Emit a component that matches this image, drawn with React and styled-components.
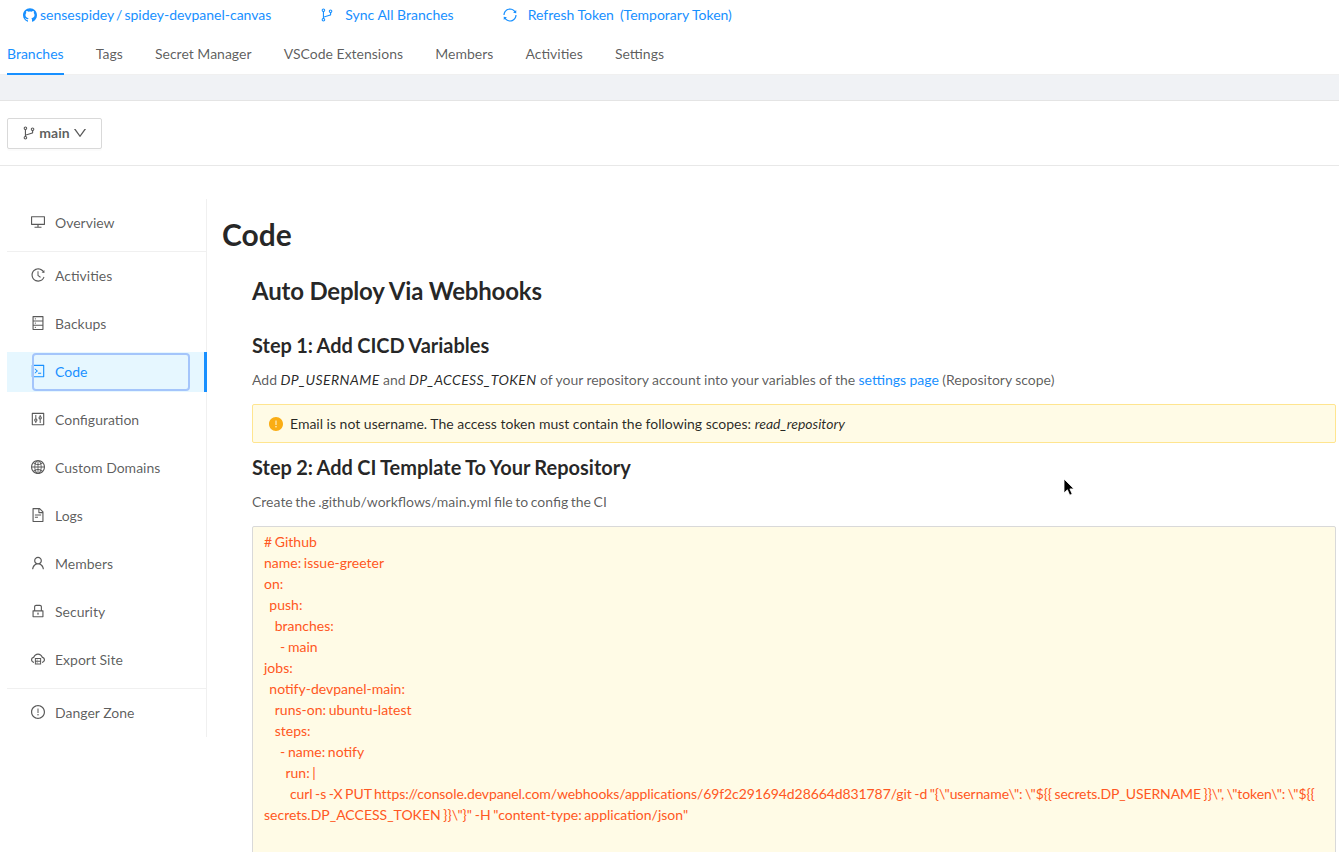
import React from 'react'
import styled, { createGlobalStyle } from 'styled-components'
import {
  AiFillGithub, AiOutlineBranches, AiOutlineSync, AiOutlineDown, AiOutlineDesktop, AiOutlineHistory,
  AiOutlineDatabase, AiOutlineCode, AiOutlineControl, AiOutlineGlobal, AiOutlineFileText, AiOutlineUser,
  AiOutlineLock, AiOutlineCloudServer, AiOutlineExclamationCircle, AiFillExclamationCircle,
} from 'react-icons/ai'

const GlobalStyle = createGlobalStyle`
  html, body { margin: 0; padding: 0; height: 100%; overflow: hidden; background: #fff; }
  body { font-family: Lato, "Liberation Sans", sans-serif; font-size: 14px; line-height: 21px; color: rgba(0, 0, 0, 0.85); }
  * { box-sizing: border-box; }
`

const tabs = ['Branches', 'Tags', 'Secret Manager', 'VSCode Extensions', 'Members', 'Activities', 'Settings']

const yamlHead = `# Github
name: issue-greeter
on:
  push:
    branches:
      - main
jobs:
  notify-devpanel-main:
    runs-on: ubuntu-latest
    steps:
      - name: notify
        run: |`

const curlLine = `          curl -s -X PUT https://console.devpanel.com/webhooks/applications/69f2c291694d28664d831787/git -d "{\\"username\\": \\"\${{ secrets.DP_USERNAME }}\\", \\"token\\": \\"\${{ `

const curlTail = `secrets.DP_ACCESS_TOKEN }}\\"}" -H "content-type: application/json"
`

export default function App() {
  return (
    <Page>
      <GlobalStyle />
      <TopLinks>
        <TopLink $gap={2} $tight><AiFillGithub size={16} />sensespidey / spidey-devpanel-canvas</TopLink>
        <TopLink><AiOutlineBranches size={16} />Sync All Branches</TopLink>
        <TopLink><AiOutlineSync size={16} /><span>Refresh Token</span><Note>(Temporary Token)</Note></TopLink>
      </TopLinks>
      <Tabs>
        {tabs.map((t, i) => <Tab key={t} $active={i === 0}>{t}</Tab>)}
      </Tabs>
      <Band />
      <BranchBar>
        <BranchButton>
          <AiOutlineBranches size={16} />
          <strong>main</strong>
          <AiOutlineDown size={16} />
        </BranchButton>
      </BranchBar>
      <Main>
        <Sidebar>
          <NavItem><AiOutlineDesktop />Overview</NavItem>
          <NavDivider />
          <NavItem><AiOutlineHistory />Activities</NavItem>
          <NavItem><AiOutlineDatabase />Backups</NavItem>
          <NavItem $active><AiOutlineCode />Code<FocusRing /></NavItem>
          <NavItem><AiOutlineControl />Configuration</NavItem>
          <NavItem><AiOutlineGlobal />Custom Domains</NavItem>
          <NavItem><AiOutlineFileText />Logs</NavItem>
          <NavItem><AiOutlineUser />Members</NavItem>
          <NavItem><AiOutlineLock />Security</NavItem>
          <NavItem><AiOutlineCloudServer />Export Site</NavItem>
          <NavDivider />
          <NavItem><AiOutlineExclamationCircle />Danger Zone</NavItem>
        </Sidebar>
        <Content>
          <PageTitle>Code</PageTitle>
          <Guide>
            <GuideTitle>Auto Deploy Via Webhooks</GuideTitle>
            <StepTitle>Step 1: Add CICD Variables</StepTitle>
            <Para>
              Add <em>DP_USERNAME</em> and <em>DP_ACCESS_TOKEN</em> of your repository account into your variables of the <a href="#settings">settings page</a> (Repository scope)
            </Para>
            <Alert>
              <AiFillExclamationCircle size={16} />
              <span>Email is not username. The access token must contain the following scopes: <em>read_repository</em></span>
            </Alert>
            <StepTitle>Step 2: Add CI Template To Your Repository</StepTitle>
            <Para $tight>Create the .github/workflows/main.yml file to config the CI</Para>
            <CodeBlock>
              <CodeLines>{yamlHead}</CodeLines>
              <CurlLine>{curlLine}</CurlLine>{curlTail}
            </CodeBlock>
          </Guide>
        </Content>
      </Main>
      <Cursor viewBox="0 0 12 19" width="12" height="19">
        <path d="M1 1v14l3.4-3.2 2.3 5.4 2.5-1.1-2.3-5.2H11z" fill="#000" stroke="#fff" strokeWidth="0.8" />
      </Cursor>
    </Page>
  )
}

const Page = styled.div`
  position: relative;
  height: 100vh;
  overflow: hidden;
`

const TopLinks = styled.div`
  display: flex;
  gap: 18px;
  height: 31px;
  padding-left: 7px;
`

const TopLink = styled.a`
  display: flex;
  align-items: center;
  gap: ${props => props.$gap || 10}px;
  padding: 0 15px;
  height: 29px;
  color: #1890ff;
  white-space: nowrap;
  word-spacing: ${props => props.$tight ? '-1.5px' : '0'};
`

const Note = styled.span`
  margin-left: -4px;
`

const Tabs = styled.div`
  display: flex;
  gap: 32.2px;
  height: 44px;
  padding-left: 7px;
  border-bottom: 1px solid #f0f0f0;
`

const Tab = styled.div`
  display: flex;
  align-items: center;
  height: 44px;
  padding-top: 2px;
  color: ${props => props.$active ? '#1890ff' : 'rgba(0, 0, 0, 0.65)'};
  border-bottom: 2px solid ${props => props.$active ? '#1890ff' : 'transparent'};
`

const Band = styled.div`
  height: 26px;
  background: #f0f2f5;
  border-bottom: 1px solid #e4e4e4;
`

const BranchBar = styled.div`
  height: 65px;
  padding: 17px 7px 0;
  border-bottom: 1px solid #e8e8e8;
`

const BranchButton = styled.button`
  display: flex;
  align-items: center;
  justify-content: center;
  gap: 2px;
  width: 95px;
  height: 31px;
  padding: 0 0 2px;
  background: #fff;
  border: 1px solid #d9d9d9;
  border-radius: 2px;
  box-shadow: 0 2px 0 rgba(0, 0, 0, 0.015);
  color: rgba(0, 0, 0, 0.65);
  font: inherit;
`

const Main = styled.div`
  display: flex;
  align-items: flex-start;
  padding: 33px 3px 0 7px;
`

const Sidebar = styled.nav`
  flex: none;
  width: 200px;
  padding: 4px 0;
  border-right: 1px solid #f0f0f0;
`

const NavItem = styled.div`
  position: relative;
  display: flex;
  align-items: center;
  gap: 9px;
  height: 40px;
  margin-bottom: 8px;
  padding: 0 0 2px 23px;
  margin-right: ${props => props.$active ? '-1px' : '0'};
  color: ${props => props.$active ? '#1890ff' : 'rgba(0, 0, 0, 0.65)'};
  background: ${props => props.$active ? '#e6f7ff' : 'transparent'};
  border-right: ${props => props.$active ? '3px solid #1890ff' : 'none'};

  svg { flex: none; width: 16px; height: 16px; }
  &:last-child { margin-bottom: 0; }
`

const FocusRing = styled.span`
  position: absolute;
  left: 25px;
  right: 14px;
  top: 1px;
  bottom: 1px;
  border: 2px solid #a4c5fb;
  border-radius: 4px;
`

const NavDivider = styled.div`
  height: 1px;
  margin-bottom: 4px;
  background: #f0f0f0;
`

const Content = styled.main`
  flex: 1;
  min-width: 0;
  padding: 16px 0 0 15px;
`

const PageTitle = styled.h1`
  margin: 0;
  font-size: 30px;
  line-height: 38px;
  font-weight: 700;
  color: rgba(0, 0, 0, 0.85);
`

const Guide = styled.section`
  padding: 22px 0 0 30px;
`

const GuideTitle = styled.h2`
  margin: 0 0 24px;
  font-size: 24px;
  line-height: 32px;
  font-weight: 700;
  letter-spacing: -0.2px;
`

const StepTitle = styled.h3`
  margin: 0 0 10px;
  font-size: 20px;
  line-height: 28px;
  font-weight: 700;
  word-spacing: -0.6px;
`

const Para = styled.p`
  margin: 0 0 14px;
  color: rgba(0, 0, 0, 0.65);
  word-spacing: ${props => props.$tight ? '-1px' : '-0.2px'};

  em { font-style: italic; letter-spacing: 0.4px; color: rgba(0, 0, 0, 0.85); }
  a { color: #1890ff; text-decoration: none; }
`

const Alert = styled.div`
  display: flex;
  align-items: center;
  gap: 6px;
  height: 39px;
  margin-bottom: 10px;
  padding: 0 15px;
  background: #fffbe6;
  border: 1px solid #ffe58f;
  border-radius: 2px;

  svg { flex: none; color: #faad14; }
`

const CodeBlock = styled.pre`
  margin: 0;
  min-height: 400px;
  padding: 4px 11px;
  background: #fffbe6;
  border: 1px solid #d9d9d9;
  border-radius: 2px;
  color: #ff5722;
  font: inherit;
  word-spacing: -0.9px;
  white-space: pre-wrap;
`

const CodeLines = styled.div`
  white-space: pre;
`

const CurlLine = styled.span`
  letter-spacing: -0.09px;
`

const Cursor = styled.svg`
  position: absolute;
  left: 1063px;
  top: 478px;
`
